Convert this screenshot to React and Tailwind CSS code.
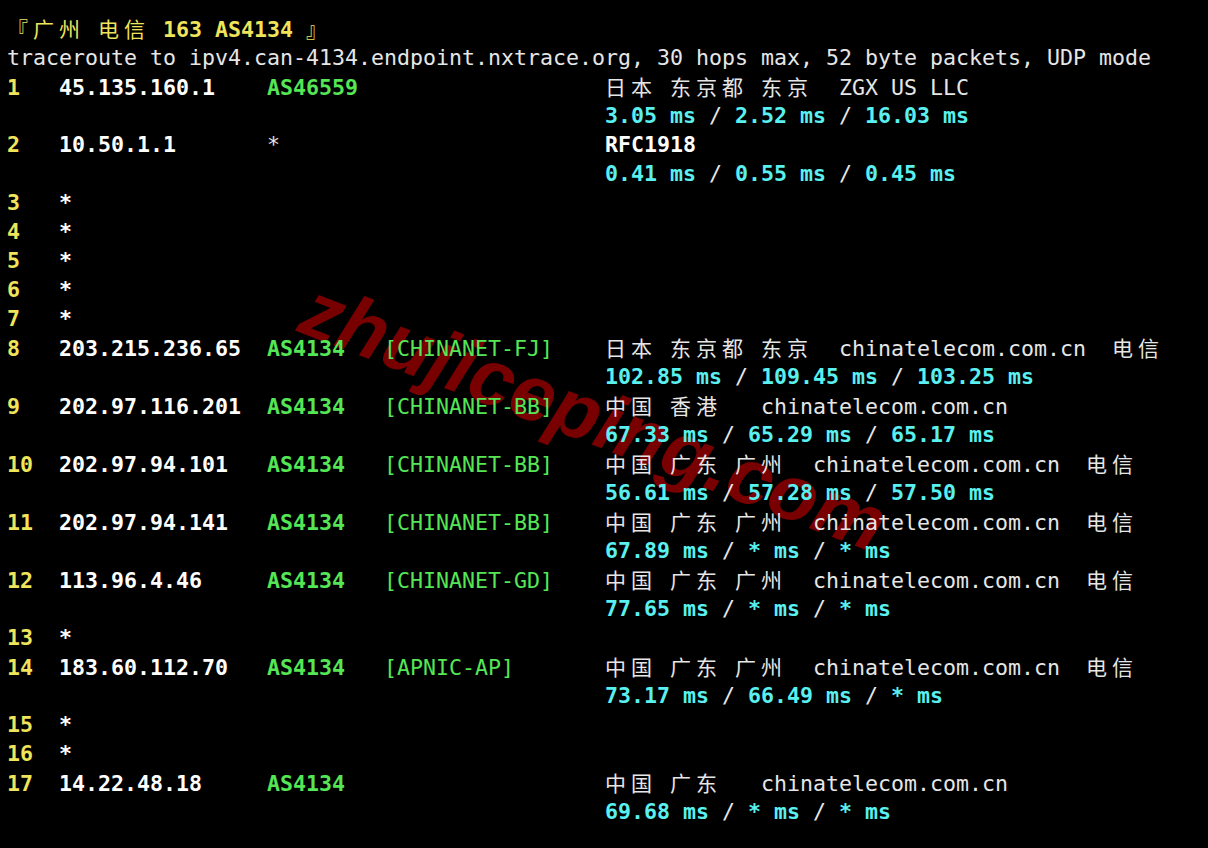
import React from 'react';

const YEL = 'text-[#f0e45a]';
const GRN = 'text-[#55e655]';
const CYN = 'text-[#5af0f0]';
const WHT = 'text-white';
const GRY = 'text-[#e6e6e6]';

const isWide = (ch) => ch.charCodeAt(0) > 0x2e7f;

// splits a string so that CJK chars take two columns (26px)
const Seg = ({ t, c = GRY, b = false }) => {
    const parts = [];
    let buf = '';
    [...t].forEach((ch, i) => {
        if (isWide(ch)) {
            if (buf) { parts.push(buf); buf = ''; }
            parts.push({ ch, i });
        } else {
            buf += ch;
        }
    });
    if (buf) parts.push(buf);
    return (
        <span className={`${c} ${b ? 'font-bold' : 'font-normal'}`}>
            {parts.map((p, k) =>
                typeof p === 'string' ? (
                    <span key={k}>{p}</span>
                ) : (
                    <span key={k} className="inline-block w-[26px] text-left font-['Noto_Sans_CJK_SC',sans-serif] text-[21px] font-normal">
                        {p.ch}
                    </span>
                )
            )}
        </span>
    );
};

const Line = ({ children }) => (
    <div className="h-[29px] leading-[29px] whitespace-pre">{children}</div>
);

const pad = (s, n) => s + ' '.repeat(Math.max(0, n - s.length));

const Rtt = ({ vals }) => (
    <Line>
        <Seg t={' '.repeat(46)} />
        {vals.map((v, i) => (
            <React.Fragment key={i}>
                {i > 0 && <Seg t=" / " c={GRY} />}
                <Seg t={`${v} ms`} c={CYN} b />
            </React.Fragment>
        ))}
    </Line>
);

const Hop = ({ n, ip, as, net, geo }) => (
    <Line>
        <Seg t={pad(String(n), 4)} c={YEL} b />
        <Seg t={pad(ip, 16)} c={WHT} b />
        <Seg t={pad(as, 9)} c={GRN} b />
        <Seg t={pad(net || '', 17)} c={GRN} />
        <Seg t={geo} c={GRY} />
    </Line>
);

const Star = ({ n }) => (
    <Line>
        <Seg t={pad(String(n), 4)} c={YEL} b />
        <Seg t="*" c={WHT} b />
    </Line>
);

const App = () => {
    return (
        <div className="relative w-[1208px] h-[848px] bg-black overflow-hidden font-['DejaVu_Sans_Mono',monospace] text-[21.6px]">
            {/* watermark */}
            <div className="absolute left-[594px] top-[416px] -translate-x-1/2 -translate-y-1/2 rotate-[21deg] font-['Liberation_Sans',sans-serif] font-bold italic text-[79px] leading-none text-[#780000] whitespace-nowrap">
                zhujiceping.com
            </div>

            <div className="relative pl-[7px] pt-[14px]">
                <Line>
                    <Seg t="『广州 电信 " c={YEL} />
                    <Seg t="163 AS4134" c={YEL} b />
                    <Seg t=" 』" c={YEL} />
                </Line>
                <Line>
                    <Seg t="traceroute to ipv4.can-4134.endpoint.nxtrace.org, 30 hops max, 52 byte packets, UDP mode" c={GRY} />
                </Line>

                <Line>
                    <Seg t="1   " c={YEL} b />
                    <Seg t="45.135.160.1    " c={WHT} b />
                    <Seg t={pad('AS46559', 26)} c={GRN} b />
                    <Seg t="日本 东京都 东京  ZGX US LLC" c={GRY} />
                </Line>
                <Rtt vals={['3.05', '2.52', '16.03']} />

                <Line>
                    <Seg t="2   " c={YEL} b />
                    <Seg t="10.50.1.1       " c={WHT} b />
                    <Seg t={pad('*', 26)} c={GRY} />
                    <Seg t="RFC1918" c={WHT} b />
                </Line>
                <Rtt vals={['0.41', '0.55', '0.45']} />

                <Star n={3} />
                <Star n={4} />
                <Star n={5} />
                <Star n={6} />
                <Star n={7} />

                <Hop n={8} ip="203.215.236.65" as="AS4134" net="[CHINANET-FJ]" geo="日本 东京都 东京  chinatelecom.com.cn  电信" />
                <Rtt vals={['102.85', '109.45', '103.25']} />
                <Hop n={9} ip="202.97.116.201" as="AS4134" net="[CHINANET-BB]" geo="中国 香港   chinatelecom.com.cn" />
                <Rtt vals={['67.33', '65.29', '65.17']} />
                <Hop n={10} ip="202.97.94.101" as="AS4134" net="[CHINANET-BB]" geo="中国 广东 广州  chinatelecom.com.cn  电信" />
                <Rtt vals={['56.61', '57.28', '57.50']} />
                <Hop n={11} ip="202.97.94.141" as="AS4134" net="[CHINANET-BB]" geo="中国 广东 广州  chinatelecom.com.cn  电信" />
                <Rtt vals={['67.89', '*', '*']} />
                <Hop n={12} ip="113.96.4.46" as="AS4134" net="[CHINANET-GD]" geo="中国 广东 广州  chinatelecom.com.cn  电信" />
                <Rtt vals={['77.65', '*', '*']} />
                <Star n={13} />
                <Hop n={14} ip="183.60.112.70" as="AS4134" net="[APNIC-AP]" geo="中国 广东 广州  chinatelecom.com.cn  电信" />
                <Rtt vals={['73.17', '66.49', '*']} />
                <Star n={15} />
                <Star n={16} />
                <Hop n={17} ip="14.22.48.18" as="AS4134" geo="中国 广东   chinatelecom.com.cn" />
                <Rtt vals={['69.68', '*', '*']} />
            </div>
        </div>
    );
};

export default App;
